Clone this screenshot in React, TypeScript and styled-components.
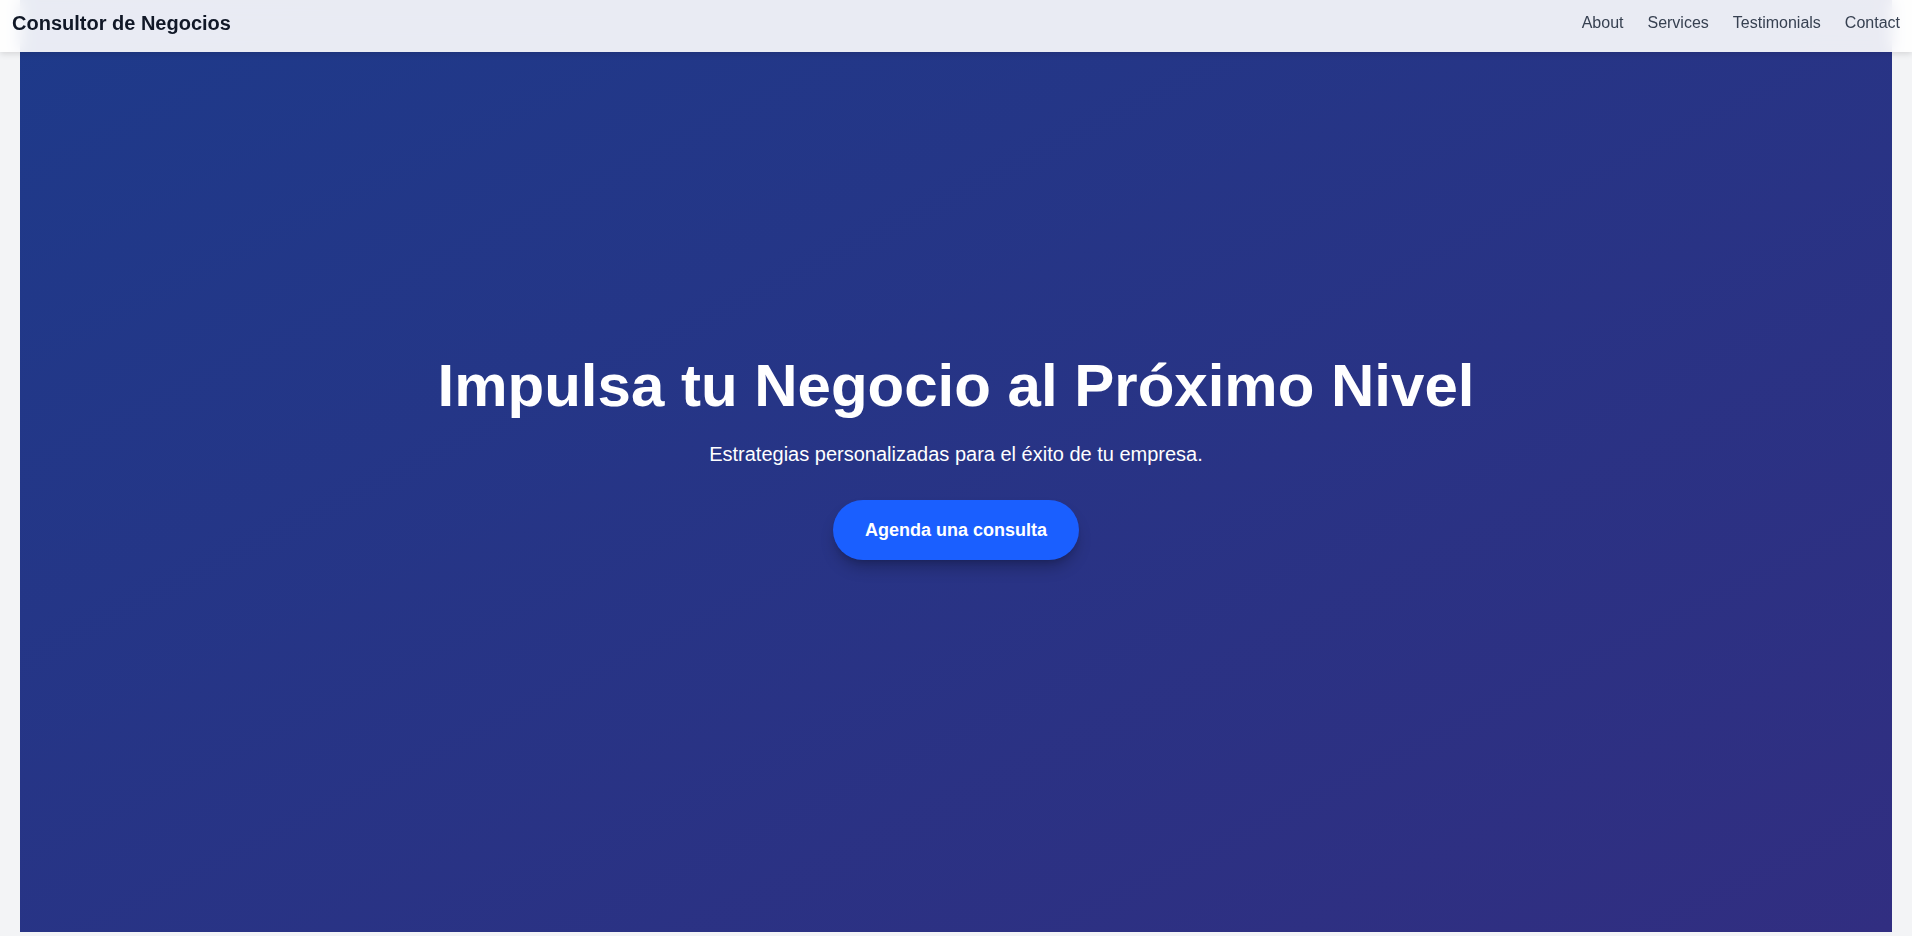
import styled, { createGlobalStyle } from "styled-components";

const GlobalStyle = createGlobalStyle`
	* {
		box-sizing: border-box;
	}
	body {
		margin: 0;
		background-color: #f3f4f6;
		font-family: "Liberation Sans", Arial, sans-serif;
		overflow: hidden;
	}
`;

const Header = styled.header`
	position: fixed;
	top: 0;
	left: 0;
	right: 0;
	z-index: 10;

	display: flex;
	justify-content: space-between;
	align-items: center;

	height: 52px;
	padding: 0 12px 6px;

	background-color: rgba(255, 255, 255, 0.9);
	backdrop-filter: blur(8px);
	box-shadow: 0 2px 6px rgba(0, 0, 0, 0.12);
`;

const Logo = styled.div`
	font-size: 20px;
	line-height: 28px;
	font-weight: bold;
	color: #111827;
`;

const Nav = styled.nav`
	display: flex;
	gap: 24px;
`;

const NavLink = styled.a`
	font-size: 16px;
	line-height: 24px;
	color: #374151;
	text-decoration: none;
	cursor: pointer;
`;

const Page = styled.main`
	padding: 0 20px;
`;

const Hero = styled.section`
	display: flex;
	flex-direction: column;
	align-items: center;
	justify-content: center;

	height: 932px;
	padding-bottom: 16px;

	background: linear-gradient(to bottom right, #1e3a8a, #312e81);
	color: white;
	text-align: center;
`;

const Title = styled.h1`
	margin: 0 0 24px;
	font-size: 60px;
	line-height: 1;
	font-weight: bold;
`;

const Subtitle = styled.p`
	margin: 0 0 32px;
	font-size: 20px;
	line-height: 28px;
`;

const Cta = styled.button`
	padding: 16px 32px;
	border: none;
	border-radius: 9999px;

	background-color: #1a5fff;
	color: white;
	font-family: inherit;
	font-size: 18px;
	line-height: 28px;
	font-weight: bold;

	box-shadow: 0 10px 15px -3px rgba(0, 0, 0, 0.25), 0 4px 6px -4px rgba(0, 0, 0, 0.2);
	cursor: pointer;
`;

const links = ["About", "Services", "Testimonials", "Contact"];

export default function App() {
	return (
		<>
			<GlobalStyle />
			<Header>
				<Logo>Consultor de Negocios</Logo>
				<Nav>
					{links.map((l) => (
						<NavLink key={l}>{l}</NavLink>
					))}
				</Nav>
			</Header>
			<Page>
				<Hero>
					<Title>Impulsa tu Negocio al Próximo Nivel</Title>
					<Subtitle>Estrategias personalizadas para el éxito de tu empresa.</Subtitle>
					<Cta>Agenda una consulta</Cta>
				</Hero>
			</Page>
		</>
	);
}
